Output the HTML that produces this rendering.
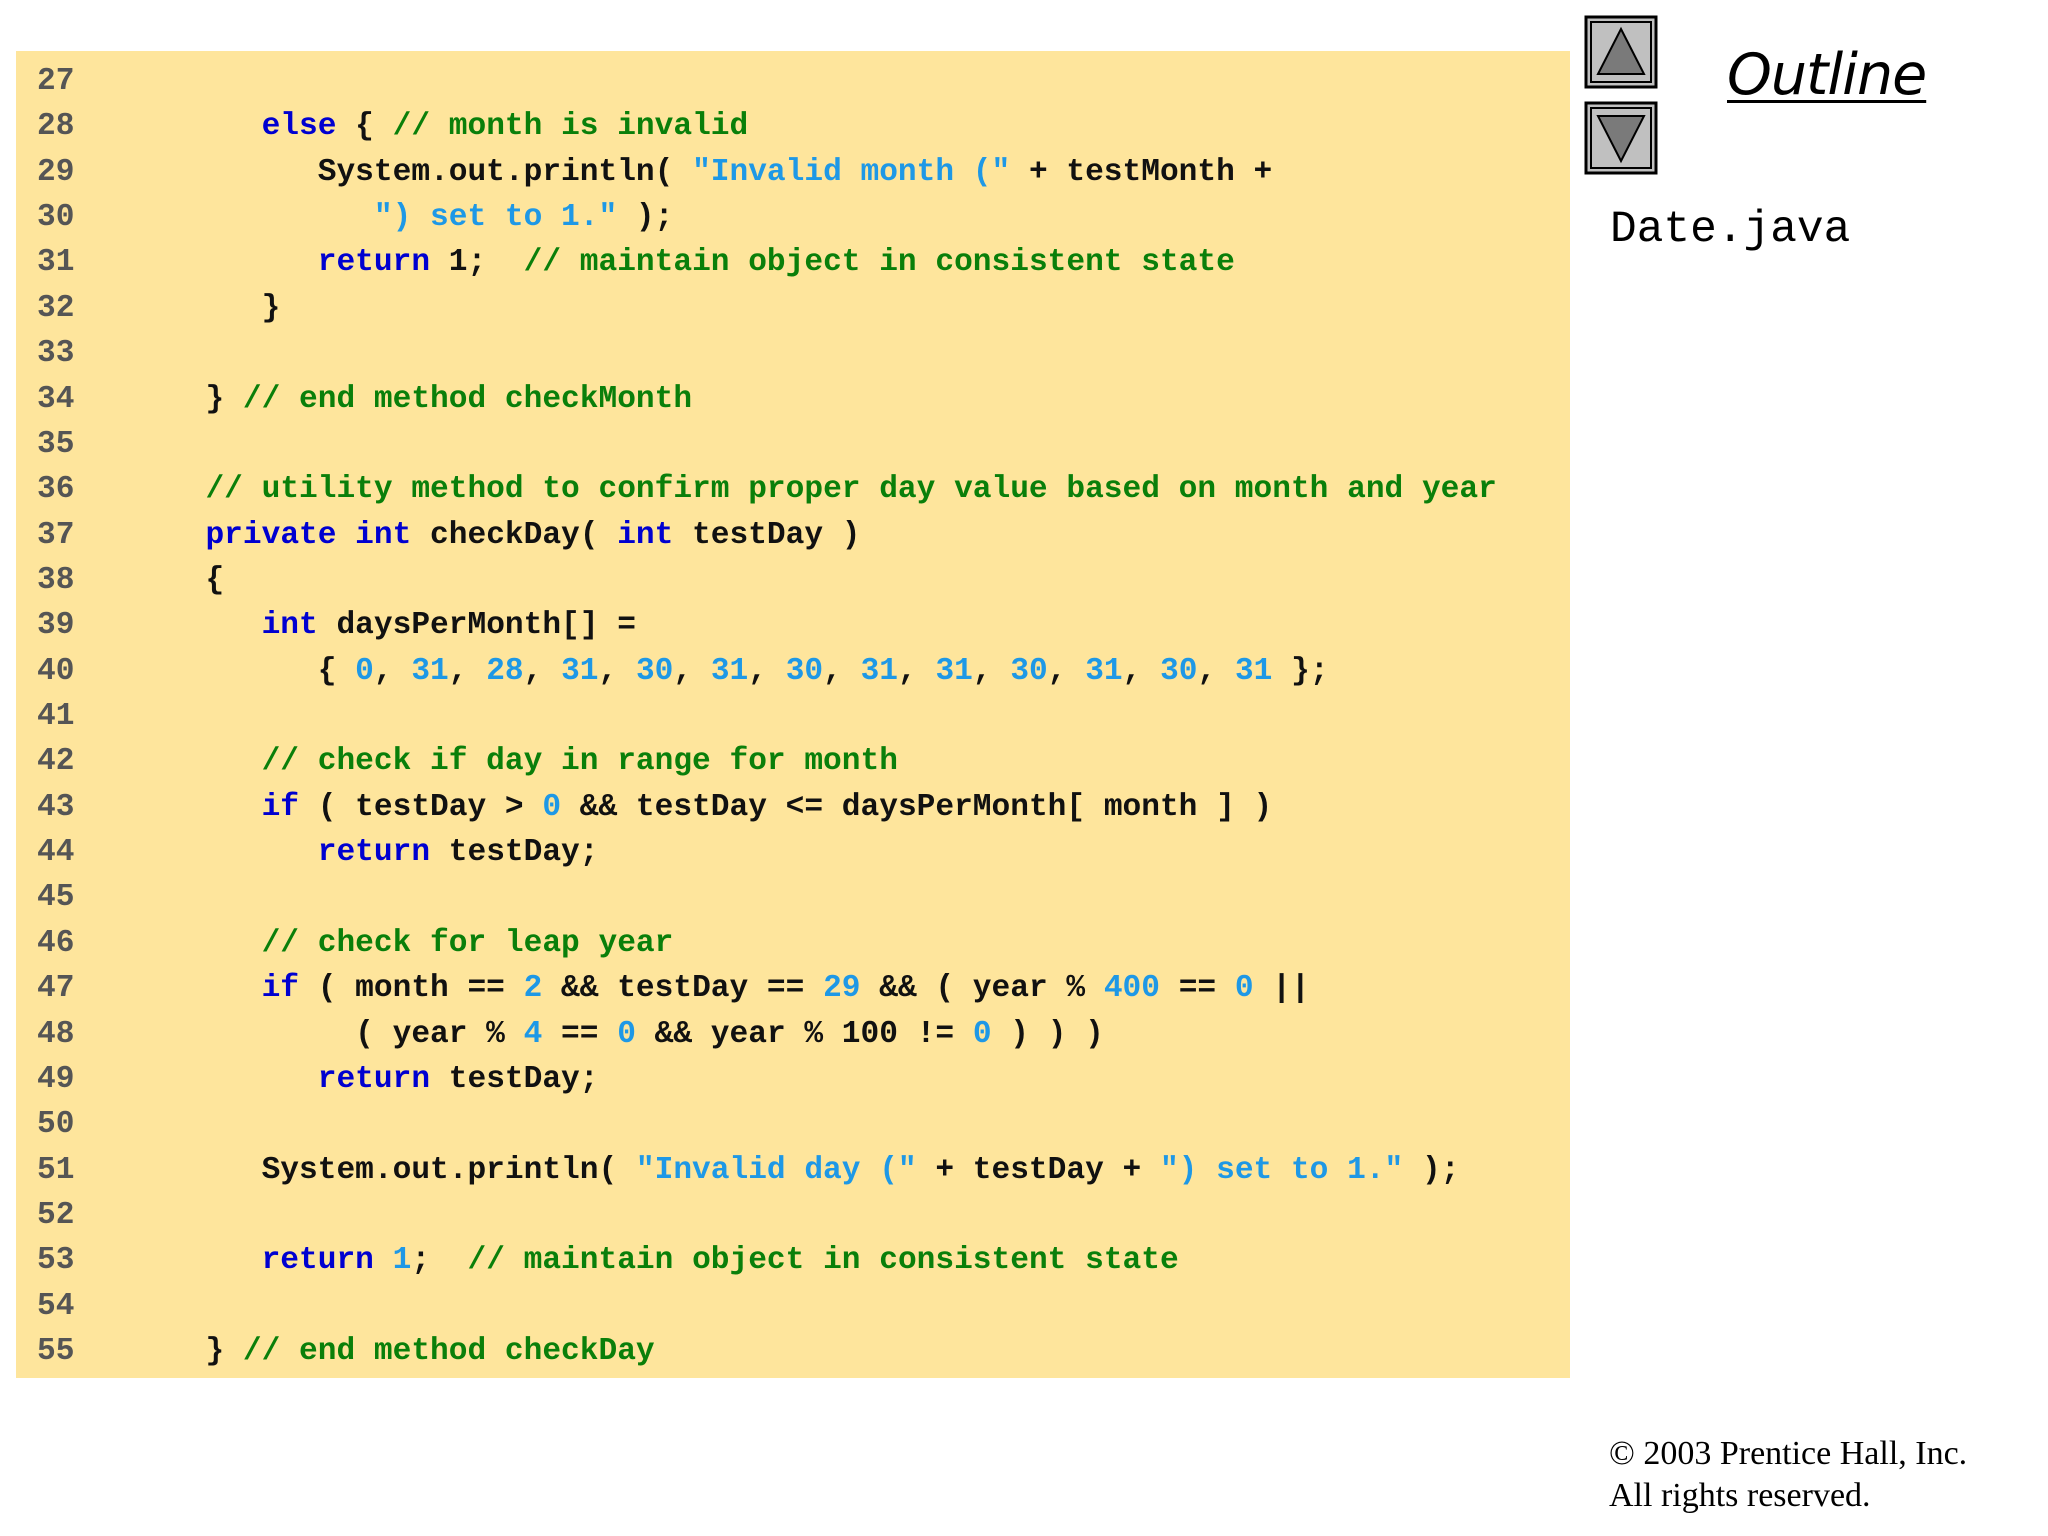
<!DOCTYPE html>
<html><head><meta charset="utf-8"><style>
html,body{margin:0;padding:0;background:#fff;width:2048px;height:1536px;overflow:hidden;position:relative}
.box{position:absolute;left:16px;top:51px;width:1554px;height:1327px;background:#fee59c}
pre{position:absolute;left:37px;top:59px;margin:0;font-family:"Liberation Mono",monospace;font-weight:bold;font-size:31.2px;line-height:45.36px;color:#111}
.n{color:#555}.k{color:#0000d0}.c{color:#0a7f0a}.s{color:#1e98e6}
.outline{position:absolute;left:1727px;top:40px;font-family:"DejaVu Sans","Liberation Sans",sans-serif;font-style:italic;font-size:57px;line-height:70px;color:#000;text-decoration:underline;text-decoration-thickness:3px;text-underline-offset:6px;letter-spacing:-1px}
.file{position:absolute;left:1610px;top:205px;font-family:"Liberation Mono",monospace;font-size:44.5px;line-height:50px;color:#000}
.copy{position:absolute;left:1609px;top:1433px;font-family:"Liberation Serif",serif;font-size:34px;line-height:42px;color:#000}
</style></head><body>
<div class="box"></div>
<pre><span class="n">27</span>
<span class="n">28</span>          <span class="k">else</span> { <span class="c">// month is invalid</span>
<span class="n">29</span>             System.out.println( <span class="s">"Invalid month ("</span> + testMonth +
<span class="n">30</span>                <span class="s">") set to 1."</span> );
<span class="n">31</span>             <span class="k">return</span> 1;  <span class="c">// maintain object in consistent state</span>
<span class="n">32</span>          }
<span class="n">33</span>
<span class="n">34</span>       } <span class="c">// end method checkMonth</span>
<span class="n">35</span>
<span class="n">36</span>       <span class="c">// utility method to confirm proper day value based on month and year</span>
<span class="n">37</span>       <span class="k">private int</span> checkDay( <span class="k">int</span> testDay )
<span class="n">38</span>       {
<span class="n">39</span>          <span class="k">int</span> daysPerMonth[] =
<span class="n">40</span>             { <span class="s">0</span>, <span class="s">31</span>, <span class="s">28</span>, <span class="s">31</span>, <span class="s">30</span>, <span class="s">31</span>, <span class="s">30</span>, <span class="s">31</span>, <span class="s">31</span>, <span class="s">30</span>, <span class="s">31</span>, <span class="s">30</span>, <span class="s">31</span> };
<span class="n">41</span>
<span class="n">42</span>          <span class="c">// check if day in range for month</span>
<span class="n">43</span>          <span class="k">if</span> ( testDay &gt; <span class="s">0</span> &amp;&amp; testDay &lt;= daysPerMonth[ month ] )
<span class="n">44</span>             <span class="k">return</span> testDay;
<span class="n">45</span>
<span class="n">46</span>          <span class="c">// check for leap year</span>
<span class="n">47</span>          <span class="k">if</span> ( month == <span class="s">2</span> &amp;&amp; testDay == <span class="s">29</span> &amp;&amp; ( year % <span class="s">400</span> == <span class="s">0</span> ||
<span class="n">48</span>               ( year % <span class="s">4</span> == <span class="s">0</span> &amp;&amp; year % 100 != <span class="s">0</span> ) ) )
<span class="n">49</span>             <span class="k">return</span> testDay;
<span class="n">50</span>
<span class="n">51</span>          System.out.println( <span class="s">"Invalid day ("</span> + testDay + <span class="s">") set to 1."</span> );
<span class="n">52</span>
<span class="n">53</span>          <span class="k">return</span> <span class="s">1</span>;  <span class="c">// maintain object in consistent state</span>
<span class="n">54</span>
<span class="n">55</span>       } <span class="c">// end method checkDay</span></pre>

<svg style="position:absolute;left:1584px;top:15px" width="74" height="160" viewBox="0 0 74 160">
  <g stroke="#000" stroke-width="2">
    <rect x="2" y="2" width="70" height="70" fill="#c0c0c0" stroke-width="3"/>
    <rect x="7" y="7" width="60" height="60" fill="none"/>
    <polygon points="37,14 60,59 14,59" fill="#7a7a7a"/>
    <rect x="2" y="88" width="70" height="70" fill="#c0c0c0" stroke-width="3"/>
    <rect x="7" y="93" width="60" height="60" fill="none"/>
    <polygon points="14,101 60,101 37,146" fill="#7a7a7a"/>
  </g>
</svg>
<div class="outline">Outline</div>
<div class="file">Date.java</div>
<div class="copy">© 2003 Prentice Hall, Inc.<br>All rights reserved.</div>
</body></html>
